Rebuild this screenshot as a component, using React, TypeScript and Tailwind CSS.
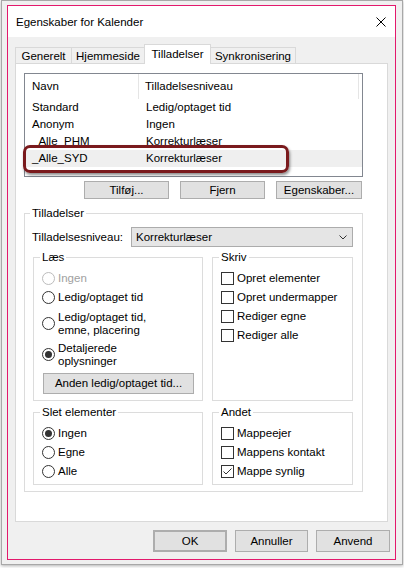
import React from 'react';

// Windows-style radio button
const Radio = ({
  checked = false,
  disabled = false,
  children,
  className = 'h-[19px]',
}: {
  checked?: boolean;
  disabled?: boolean;
  children: React.ReactNode;
  className?: string;
}) => (
  <div className={`flex items-center gap-[3px] ${className}`}>
    <span
      className={`flex h-[13px] w-[13px] shrink-0 items-center justify-center rounded-full border bg-white ${
        disabled ? 'border-[#bcbcbc]' : 'border-[#333333]'
      }`}
    >
      {checked && <span className="h-[7px] w-[7px] rounded-full bg-[#333333]" />}
    </span>
    <span className={`leading-[13px] ${disabled ? 'text-[#a0a0a0]' : ''}`}>{children}</span>
  </div>
);

// Windows-style check box
const Check = ({ checked = false, children }: { checked?: boolean; children: React.ReactNode }) => (
  <div className="flex h-[19px] items-center gap-[3px]">
    <span className="flex h-[13px] w-[13px] shrink-0 items-center justify-center border border-[#333333] bg-white">
      {checked && (
        <svg width="11" height="11" viewBox="0 0 11 11">
          <path d="M1.5 5.5 L4 8 L9.5 2.5" fill="none" stroke="#333" strokeWidth="1" />
        </svg>
      )}
    </span>
    <span className="leading-[13px]">{children}</span>
  </div>
);

const Group = ({
  title,
  className = '',
  children,
}: {
  title: string;
  className?: string;
  children: React.ReactNode;
}) => (
  <fieldset className={`border border-[#dcdcdc] ${className}`}>
    <legend className="-ml-[2px] px-[2px] leading-[15px]">{title}</legend>
    {children}
  </fieldset>
);

const Btn = ({ children, className = '' }: { children: React.ReactNode; className?: string }) => (
  <button className={`flex items-center justify-center border border-[#adadad] bg-[#e1e1e1] leading-[13px] ${className}`}>
    {children}
  </button>
);

const rows = [
  { name: 'Standard', level: 'Ledig/optaget tid' },
  { name: 'Anonym', level: 'Ingen' },
  { name: '_Alle_PHM', level: 'Korrekturlæser' },
  { name: '_Alle_SYD', level: 'Korrekturlæser', selected: true },
];

const tabs = [
  { label: 'Generelt', w: 'w-[57px]' },
  { label: 'Hjemmeside', w: 'w-[74px]' },
  { label: 'Tilladelser', w: 'w-[67px]', active: true },
  { label: 'Synkronisering', w: 'w-[86px]' },
];

export default function App() {
  return (
    <div className="h-[568px] w-[404px] overflow-hidden bg-white font-['Liberation_Sans',Arial,sans-serif] text-[11.5px] text-black">
      {/* window frame */}
      <div className="ml-[1px] h-[565px] w-[402px] border border-[#a8a8a8] bg-[#f0f0f0] pb-[4px] pl-[5px] pr-[6px] pt-[4px] shadow-[0_1px_3px_rgba(0,0,0,0.3)]">
        <div className="flex h-[555px] w-[389px] flex-col border border-[#e3196c] bg-[#f0f0f0]">
          {/* title bar */}
          <div className="flex h-[31px] shrink-0 items-center justify-between bg-white pl-[8px] pr-[9px] pt-[1px]">
            <span className="leading-[15px]">Egenskaber for Kalender</span>
            <svg width="10" height="10" viewBox="0 0 10 10">
              <path d="M0.5 0.5 L9.5 9.5 M9.5 0.5 L0.5 9.5" stroke="#000" strokeWidth="1" />
            </svg>
          </div>

          {/* body */}
          <div className="flex flex-col px-[7px] pt-[7px]">
            {/* tabs */}
            <div className="flex h-[20px] items-end">
              {tabs.map((t, i) =>
                t.active ? (
                  <div
                    key={t.label}
                    className={`relative z-10 flex h-[20px] items-center justify-center border border-b-0 border-[#d9d9d9] bg-white leading-[13px] ${t.w} ${i > 0 ? '-ml-px' : ''}`}
                  >
                    {t.label}
                  </div>
                ) : (
                  <div
                    key={t.label}
                    className={`mb-px flex h-[16px] items-center justify-center border border-b-0 border-[#d9d9d9] bg-[#f0f0f0] pt-[2px] leading-[13px] ${t.w} ${i > 0 ? '-ml-px' : ''}`}
                  >
                    {t.label}
                  </div>
                )
              )}
            </div>

            {/* tab panel */}
            <div className="-mt-px flex h-[459px] w-[373px] flex-col border border-[#d9d9d9] bg-white pl-[8px] pt-[9px]">
              {/* list */}
              <div className="relative h-[104px] w-[339px] border border-[#828790] bg-white">
                <div className="flex h-[25px] items-center">
                  <div className="flex h-full w-[114px] items-center border-r border-[#e5e5e5] pl-[7px]">Navn</div>
                  <div className="flex h-full w-[220px] items-center border-r border-[#e5e5e5] pl-[6px]">Tilladelsesniveau</div>
                </div>
                {rows.map((r) => (
                  <div key={r.name} className={`flex h-[17px] items-center ${r.selected ? 'bg-[#efefef]' : ''}`}>
                    <div className="w-[114px] pl-[7px]">{r.name}</div>
                    <div className="pl-[7px]">{r.level}</div>
                  </div>
                ))}
                {/* annotation highlight */}
                <div className="absolute left-[-2px] top-[71px] h-[28px] w-[266px] rounded-[7px] border-[3px] border-[#7a1a1d] shadow-[1px_2px_3px_rgba(0,0,0,0.45)]" />
              </div>

              {/* list buttons */}
              <div className="mt-[4px] flex w-[339px] justify-end gap-[11px] pr-[1px]">
                <Btn className="h-[18px] w-[85px]">Tilføj...</Btn>
                <Btn className="h-[18px] w-[85px]">Fjern</Btn>
                <Btn className="h-[18px] w-[86px]">Egenskaber...</Btn>
              </div>

              {/* Tilladelser group */}
              <Group title="Tilladelser" className="mt-[7px] w-[339px] pb-[6px] pl-[7px] pr-[8px]">
                <div className="mt-[6px] flex items-center">
                  <span className="w-[99px] leading-[13px]">Tilladelsesniveau:</span>
                  <div className="flex h-[20px] w-[222px] items-center justify-between border border-[#acacac] bg-[#e5e5e5] pl-[4px] pr-[5px]">
                    <span className="leading-[13px]">Korrekturlæser</span>
                    <svg width="8" height="5" viewBox="0 0 8 5">
                      <path d="M0.5 0.5 L4 4 L7.5 0.5" fill="none" stroke="#333" strokeWidth="1" />
                    </svg>
                  </div>
                </div>

                <div className="mt-[3px] ml-[1px] flex gap-[9px]">
                  <Group title="Læs" className="w-[170px] pb-[6px] pl-[8px] pt-[4px]">
                    <Radio disabled>Ingen</Radio>
                    <Radio>Ledig/optaget tid</Radio>
                    <Radio className="h-[33px]">
                      Ledig/optaget tid,
                      <br />
                      emne, placering
                    </Radio>
                    <Radio checked className="h-[29px]">
                      Detaljerede
                      <br />
                      oplysninger
                    </Radio>
                    <Btn className="ml-[1px] mt-[4px] h-[21px] w-[151px]">Anden ledig/optaget tid...</Btn>
                  </Group>
                  <Group title="Skriv" className="w-[141px] pl-[8px] pt-[4px]">
                    <Check>Opret elementer</Check>
                    <Check>Opret undermapper</Check>
                    <Check>Rediger egne</Check>
                    <Check>Rediger alle</Check>
                  </Group>
                </div>

                <div className="mt-[4px] ml-[1px] flex gap-[9px]">
                  <Group title="Slet elementer" className="w-[170px] pb-[3px] pl-[8px] pt-[4px]">
                    <Radio checked>Ingen</Radio>
                    <Radio>Egne</Radio>
                    <Radio>Alle</Radio>
                  </Group>
                  <Group title="Andet" className="w-[141px] pb-[3px] pl-[8px] pt-[4px]">
                    <Check>Mappeejer</Check>
                    <Check>Mappens kontakt</Check>
                    <Check checked>Mappe synlig</Check>
                  </Group>
                </div>
              </Group>
            </div>

            {/* dialog buttons */}
            <div className="-mr-[2px] mt-[8px] flex justify-end gap-[8px]">
              <Btn className="h-[22px] w-[74px] border-2 border-[#0078d7]">OK</Btn>
              <Btn className="h-[22px] w-[73px]">Annuller</Btn>
              <Btn className="h-[22px] w-[74px]">Anvend</Btn>
            </div>
          </div>
        </div>
      </div>
    </div>
  );
}
